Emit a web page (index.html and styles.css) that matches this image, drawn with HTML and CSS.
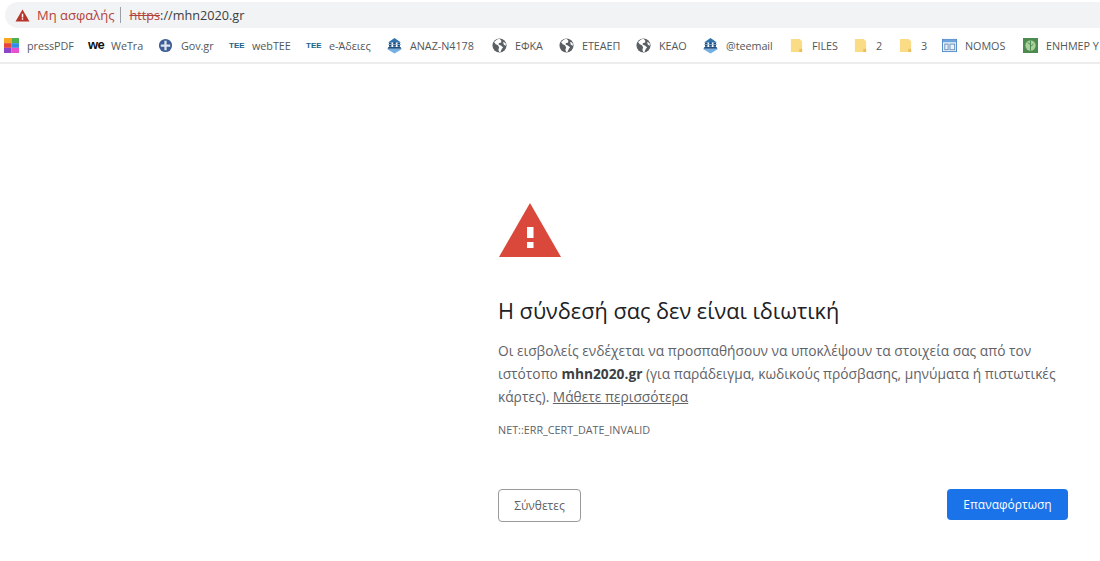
FILE: index.html
```html
<!DOCTYPE html>
<html lang="el">
<head>
<meta charset="utf-8">
<title>Απόρρητο</title>
<link rel="stylesheet" href="styles.css">
</head>
<body>
<svg class="defs" width="0" height="0" aria-hidden="true">
  <symbol id="globe" viewBox="0 0 16 16">
    <circle cx="8" cy="8" r="7.500" fill="#5a5f64"/>
    <path d="M8 .8 5.400 1.600 2.200 4.200 4 6.600 6.400 7.600 7.600 10 6.800 12.400 7.600 15 9.200 14.600 10.400 11.800 11.800 9.800 9.400 8 7 6.800 7.400 5.200 9.600 5 10 3Z" fill="#fff"/>
    <path d="M11.800 4 14.400 5.400 15 8.200 12.600 7.200Z" fill="#fff"/>
  </symbol>
  <symbol id="tee" viewBox="0 0 17 17">
    <path d="M1 12h15L8.500 16.500Z" fill="#74aee3"/>
    <path d="M1.500 11.800h14L14.500 10h-12Z" fill="#1f4f80"/>
    <path d="M3 9.800h2.500V5.500H3ZM7.200 9.800h2.600V3.500H7.200ZM11.500 9.800H14V5.500h-2.500Z" fill="#1d4a78"/>
    <path d="M2 5.500 8.500 1 15 5.500Z" fill="#3272ad"/>
    <path d="M2 7h13v.8H2Z" fill="#8fb9de"/>
  </symbol>
  <symbol id="folder" viewBox="0 0 16 16">
    <path d="M2 1h9.500L14 3.500V15H2Z" fill="#fbdc86"/>
    <path d="M11 11.500h3V15h-3Z" fill="#e8bf5b"/>
  </symbol>
</svg>

<header class="toolbar">
  <div class="omnibox">
    <svg class="warn" viewBox="0 0 16 14" width="15" height="13"><path d="M8 0.500 15.500 13.500H.5Z" fill="#b8342a"/><path d="M7.200 5h1.600v4.200H7.200ZM7.200 10h1.600v1.600H7.200Z" fill="#fff"/></svg>
    <span class="secure">Μη ασφαλής</span>
    <span class="divider"></span>
    <span class="url"><s class="scheme">https</s><span class="rest">://mhn2020.gr</span></span>
  </div>
  <nav class="bookmarks">
    <a class="mark w-press"><svg class="ico" viewBox="0 0 16 16"><rect width="8" height="5.500" fill="#f6a623"/><rect x="8" width="8" height="5.500" fill="#4caf50"/><rect y="5.500" width="8" height="5" fill="#e8443a"/><rect x="8" y="5.500" width="8" height="5" fill="#2f8de4"/><rect y="10.500" width="8" height="5.500" fill="#8e44c9"/><rect x="8" y="10.500" width="8" height="5.500" fill="#e84fd0"/></svg><span>pressPDF</span></a>
    <a class="mark w-wetra"><span class="ico wemark">we</span><span>WeTra</span></a>
    <a class="mark w-gov"><svg class="ico" viewBox="0 0 16 16"><circle cx="8" cy="8" r="7" fill="#3d5e96"/><path d="M6.800 3h2.400v3.800H13v2.400H9.200V13H6.800V9.200H3V6.800h3.800Z" fill="#dfe5f0"/></svg><span>Gov.gr</span></a>
    <a class="mark w-web"><span class="ico teemark">ΤΕΕ</span><span>webTEE</span></a>
    <a class="mark w-ead"><span class="ico teemark">ΤΕΕ</span><span>e-Άδειες</span></a>
    <a class="mark w-anaz"><svg class="ico big"><use href="#tee"/></svg><span>ANAZ-N4178</span></a>
    <a class="mark w-efka"><svg class="ico"><use href="#globe"/></svg><span>ΕΦΚΑ</span></a>
    <a class="mark w-etea"><svg class="ico"><use href="#globe"/></svg><span>ΕΤΕΑΕΠ</span></a>
    <a class="mark w-keao"><svg class="ico"><use href="#globe"/></svg><span>ΚΕΑΟ</span></a>
    <a class="mark w-teem"><svg class="ico big"><use href="#tee"/></svg><span>@teemail</span></a>
    <a class="mark w-files"><svg class="ico"><use href="#folder"/></svg><span>FILES</span></a>
    <a class="mark w-two"><svg class="ico"><use href="#folder"/></svg><span>2</span></a>
    <a class="mark w-three"><svg class="ico"><use href="#folder"/></svg><span>3</span></a>
    <a class="mark w-nomos"><svg class="ico" viewBox="0 0 16 16"><rect x=".5" y="1.500" width="15" height="13" fill="#eaf2fb" stroke="#4f8ac9"/><rect x="1" y="2" width="14" height="2.500" fill="#6ea4dc"/><rect x="3" y="6.500" width="3.500" height="6" fill="none" stroke="#6b8fb5"/><rect x="8.500" y="6.500" width="5" height="6" fill="none" stroke="#6b8fb5"/></svg><span>NOMOS</span></a>
    <a class="mark"><svg class="ico" viewBox="0 0 16 16"><rect width="16" height="16" fill="#4d8a4f"/><circle cx="8" cy="8" r="5.500" fill="#a9cf9a"/><path d="M8 2.500v11M8 7 5 4.800M8 9l3-2.400" stroke="#4d8a4f" fill="none"/></svg><span>ENHMEP Y</span></a>
  </nav>
</header>

<main class="page">
  <svg class="alert" viewBox="0 0 62 54" width="62" height="54" role="img" aria-label="Προειδοποίηση">
    <path d="M31 0 62 54H0Z" fill="#d9483b"/>
    <path d="M28 24h6.500v11H28ZM28 39h6.500v6H28Z" fill="#fff"/>
  </svg>
  <h1 class="title">Η σύνδεσή σας δεν είναι ιδιωτική</h1>
  <p class="desc">Οι εισβολείς ενδέχεται να προσπαθήσουν να υποκλέψουν τα στοιχεία σας από τον ιστότοπο <b>mhn2020.gr</b> (για παράδειγμα, κωδικούς πρόσβασης, μηνύματα ή πιστωτικές κάρτες). <a class="more">Μάθετε περισσότερα</a></p>
  <p class="code">NET::ERR_CERT_DATE_INVALID</p>
  <div class="actions">
    <button class="btn ghost">Σύνθετες</button>
    <button class="btn primary">Επαναφόρτωση</button>
  </div>
</main>
</body>
</html>
```
FILE: styles.css
```css
* { box-sizing: border-box; }
html, body { margin: 0; height: 100%; overflow: hidden; background: #fff; }
body { font-family: "Open Sans", "Noto Sans", sans-serif; color: #202124; }
.defs { display: block; height: 0; }

.toolbar { height: 64px; padding-top: 2px; border-bottom: 2px solid #ececec; }
.omnibox {
  height: 26px; margin-left: 5px; padding-left: 10px;
  display: flex; align-items: center;
  background: #f1f3f4; border-radius: 13px 0 0 13px;
}
.warn { flex: none; }
.secure { margin-left: 7px; font-size: 13px; color: #b3423a; }
.divider { width: 1px; height: 16px; margin: 0 8px 0 6px; background: #9aa0a6; }
.url { font-size: 12.700px; }
.scheme { color: #b3423a; }
.rest { color: #3c4043; }

.bookmarks {
  display: flex; align-items: center; height: 34px;
  padding-left: 4px; white-space: nowrap; overflow: hidden;
}
.mark { display: flex; flex: none; align-items: center; font-size: 10.800px; letter-spacing: -.05px; color: #54575a; }
.mark > span:last-child { margin-left: 8px; }
.ico { display: block; flex: none; width: 15px; height: 15px; }
.big { width: 17px; height: 17px; margin-right: -1px; margin-left: -1px; }
.wemark { font: 900 13px/14px "Liberation Sans", sans-serif; color: #111; text-align: center; letter-spacing: -.6px; }
.teemark { font: 700 8px/15px "Liberation Sans", sans-serif; color: #17648c; text-align: center; letter-spacing: 0; }
.w-press { width: 84px; }
.w-wetra { width: 70px; }
.w-gov { width: 71px; }
.w-web { width: 77px; }
.w-ead { width: 81px; }
.w-anaz { width: 105px; }
.w-efka { width: 67px; }
.w-etea { width: 77px; }
.w-keao { width: 67px; }
.w-teem { width: 86px; }
.w-files { width: 64px; }
.w-two { width: 45px; }
.w-three { width: 44px; }
.w-nomos { width: 81px; }

.page { width: 570px; margin-left: 498px; padding-top: 139px; }
.alert { display: block; margin-left: 1px; }
.title { margin: 38px 0 0; font-size: 21.700px; line-height: 32px; font-weight: 400; color: #202124; }
.desc { margin: 12px 0 0; font-size: 13.750px; line-height: 23px; color: #5f6368; }
.desc b { color: #3c4043; font-weight: 700; }
.more { color: #5f6368; text-decoration: underline; }
.code { margin: 14px 0 0; font-size: 10.800px; line-height: 16px; color: #5f6368; }
.actions { display: flex; justify-content: space-between; align-items: flex-start; margin-top: 51px; }
.btn { font-family: inherit; font-size: 12px; border-radius: 4px; padding: 0; }
.ghost { width: 83px; height: 33px; background: #fff; border: 1px solid #9a9a9a; color: #5f6368; }
.primary { width: 121px; height: 31px; background: #1a73e8; border: 0; color: #fff; }
```
